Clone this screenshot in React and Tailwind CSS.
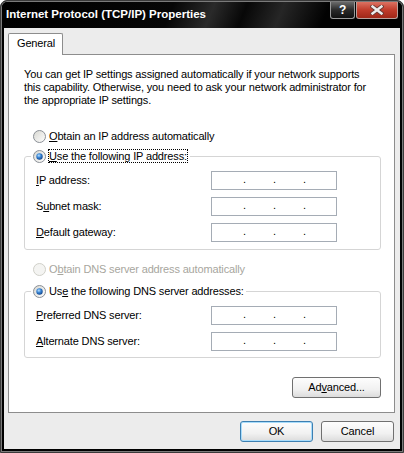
import React from "react";

const font = "font-['Liberation_Sans',Arial,sans-serif]";

function Radio({ checked = false, disabled = false }) {
  return (
    <svg width="13" height="13" viewBox="0 0 13 13" className="shrink-0">
      <defs>
        <linearGradient id="rfill" x1="0" y1="0" x2="1" y2="1">
          <stop offset="0" stopColor="#d6d6d0" />
          <stop offset="1" stopColor="#ffffff" />
        </linearGradient>
        <radialGradient id="rdot" cx="0.4" cy="0.35" r="0.7">
          <stop offset="0" stopColor="#b9e1ff" />
          <stop offset="0.45" stopColor="#3a86d6" />
          <stop offset="1" stopColor="#0d3f86" />
        </radialGradient>
      </defs>
      <circle
        cx="6.5"
        cy="6.5"
        r="6"
        fill={disabled ? "#f4f4f2" : "url(#rfill)"}
        stroke={disabled ? "#cfcfc8" : "#8a8f96"}
      />
      {checked && <circle cx="6.5" cy="6.5" r="3.2" fill="url(#rdot)" />}
    </svg>
  );
}

function IpField() {
  return (
    <div className="flex h-[19px] w-[126px] gap-[27px] border border-[#a5acb5] bg-white pl-[31px] pt-[1px]">
      <span className="w-[3px]">.</span>
      <span className="w-[3px]">.</span>
      <span className="w-[3px]">.</span>
    </div>
  );
}

function Btn({ children, main, w }) {
  return (
    <button
      className={`${w} h-[21px] rounded-[3px] border ${
        main
          ? "border-[#3c7fb1] shadow-[inset_0_0_0_1px_#a8dcfb]"
          : "border-[#707070]"
      } bg-[linear-gradient(#fdfdfd,#f1f1f1_60%,#dcdcdc)] text-[11px] leading-[13px] tracking-[-0.15px] text-black`}
    >
      {children}
    </button>
  );
}

function Row({ label }) {
  return (
    <>
      <span>{label}</span>
      <IpField />
    </>
  );
}

export default function App() {
  return (
    <div className={`${font} text-[11px] leading-[13px] tracking-[-0.15px] text-black`}>
      <div className="flex h-[453px] w-[404px] flex-col overflow-hidden rounded-t-[7px] border border-[#3a3a3a] bg-black shadow-[inset_0_0_0_1px_#7a7a7a]">
        {/* title bar */}
        <div className="mx-[1px] mt-[1px] flex h-[26px] items-start justify-between rounded-t-[6px] bg-[linear-gradient(112deg,#000_0%,#060606_42%,#2a2a2a_52%,#070707_60%,#262626_69%,#020202_80%)] pl-[4px] pr-[4px]">
          <span className="mt-[5px] text-[11.5px] leading-[14px] font-bold tracking-normal text-white">
            Internet Protocol (TCP/IP) Properties
          </span>
          <div className="flex gap-[1px]">
            <div className="flex h-[17px] w-[25px] items-center justify-center rounded-b-[3px] border border-t-0 border-[#9a9a9a] bg-[linear-gradient(#6a6a6a,#2a2a2a_50%,#111)] text-[12px] leading-[12px] font-bold text-white">
              ?
            </div>
            <div className="flex h-[17px] w-[42px] items-center justify-center rounded-b-[3px] border border-t-0 border-[#b9a19c] bg-[linear-gradient(#dc7262,#c03c2b_50%,#a02818)]">
              <svg width="14" height="10" viewBox="0 0 14 10">
                <path d="M2.5 1.5 L11.5 8.5 M11.5 1.5 L2.5 8.5" stroke="#6b3a33" strokeWidth="4.2" strokeLinecap="square" />
                <path d="M2.5 1.5 L11.5 8.5 M11.5 1.5 L2.5 8.5" stroke="#ececec" strokeWidth="2.4" strokeLinecap="square" />
              </svg>
            </div>
          </div>
        </div>

        {/* client area */}
        <div className="mx-[3px] mb-[3px] flex flex-1 flex-col bg-[#ececec] pl-[4px] pr-[5px] pt-[5px]">
          <div className="relative z-10 -mb-px h-[22px] w-[55px] rounded-t-[2px] border border-b-0 border-[#8d8d8d] bg-white pl-[8px] pt-[3px]">
            General
          </div>

          <div className="flex h-[359px] flex-col border border-[#8d8d8d] bg-white pl-[15px] pr-[13px] pt-[13px]">
            <p>
              You can get IP settings assigned automatically if your network supports
              <br />
              this capability. Otherwise, you need to ask your network administrator for
              <br />
              the appropriate IP settings.
            </p>

            <div className="ml-[9px] mt-[22px] flex h-[14px] items-center gap-[3px]">
              <Radio />
              <span>
                <u>O</u>btain an IP address automatically
              </span>
            </div>

            <fieldset className="mt-[6px] rounded-[3px] border border-[#d5d5d5]">
              <legend className="ml-[6px] px-[2px]">
                <div className="flex h-[14px] items-center">
                  <Radio checked />
                  <span className="ml-[2px] border border-dotted border-black leading-[12px]">
                    <u>U</u>se the following IP address:
                  </span>
                </div>
              </legend>
              <div className="grid grid-cols-[175px_126px] items-center gap-y-[7px] pb-[7px] pl-[11px] pt-[8px]">
                <Row label={<><u>I</u>P address:</>} />
                <Row label={<>S<u>u</u>bnet mask:</>} />
                <Row label={<><u>D</u>efault gateway:</>} />
              </div>
            </fieldset>

            <div className="ml-[9px] mt-[12px] flex h-[14px] items-center gap-[3px] text-[#a7a69e]">
              <Radio disabled />
              <span>
                O<u>b</u>tain DNS server address automatically
              </span>
            </div>

            <fieldset className="mt-[8px] rounded-[3px] border border-[#d5d5d5]">
              <legend className="ml-[6px] px-[2px]">
                <div className="flex h-[14px] items-center gap-[3px]">
                  <Radio checked />
                  <span>
                    Us<u>e</u> the following DNS server addresses:
                  </span>
                </div>
              </legend>
              <div className="grid grid-cols-[175px_126px] items-center gap-y-[7px] pb-[6px] pl-[11px] pt-[8px]">
                <Row label={<><u>P</u>referred DNS server:</>} />
                <Row label={<><u>A</u>lternate DNS server:</>} />
              </div>
            </fieldset>

            <div className="mt-[19px] flex justify-end">
              <Btn w="w-[89px]">
                Ad<u>v</u>anced...
              </Btn>
            </div>
          </div>

          <div className="mt-[8px] flex justify-end gap-[8px] pr-[1px]">
            <Btn main w="w-[73px]">OK</Btn>
            <Btn w="w-[73px]">Cancel</Btn>
          </div>
        </div>
      </div>
    </div>
  );
}
